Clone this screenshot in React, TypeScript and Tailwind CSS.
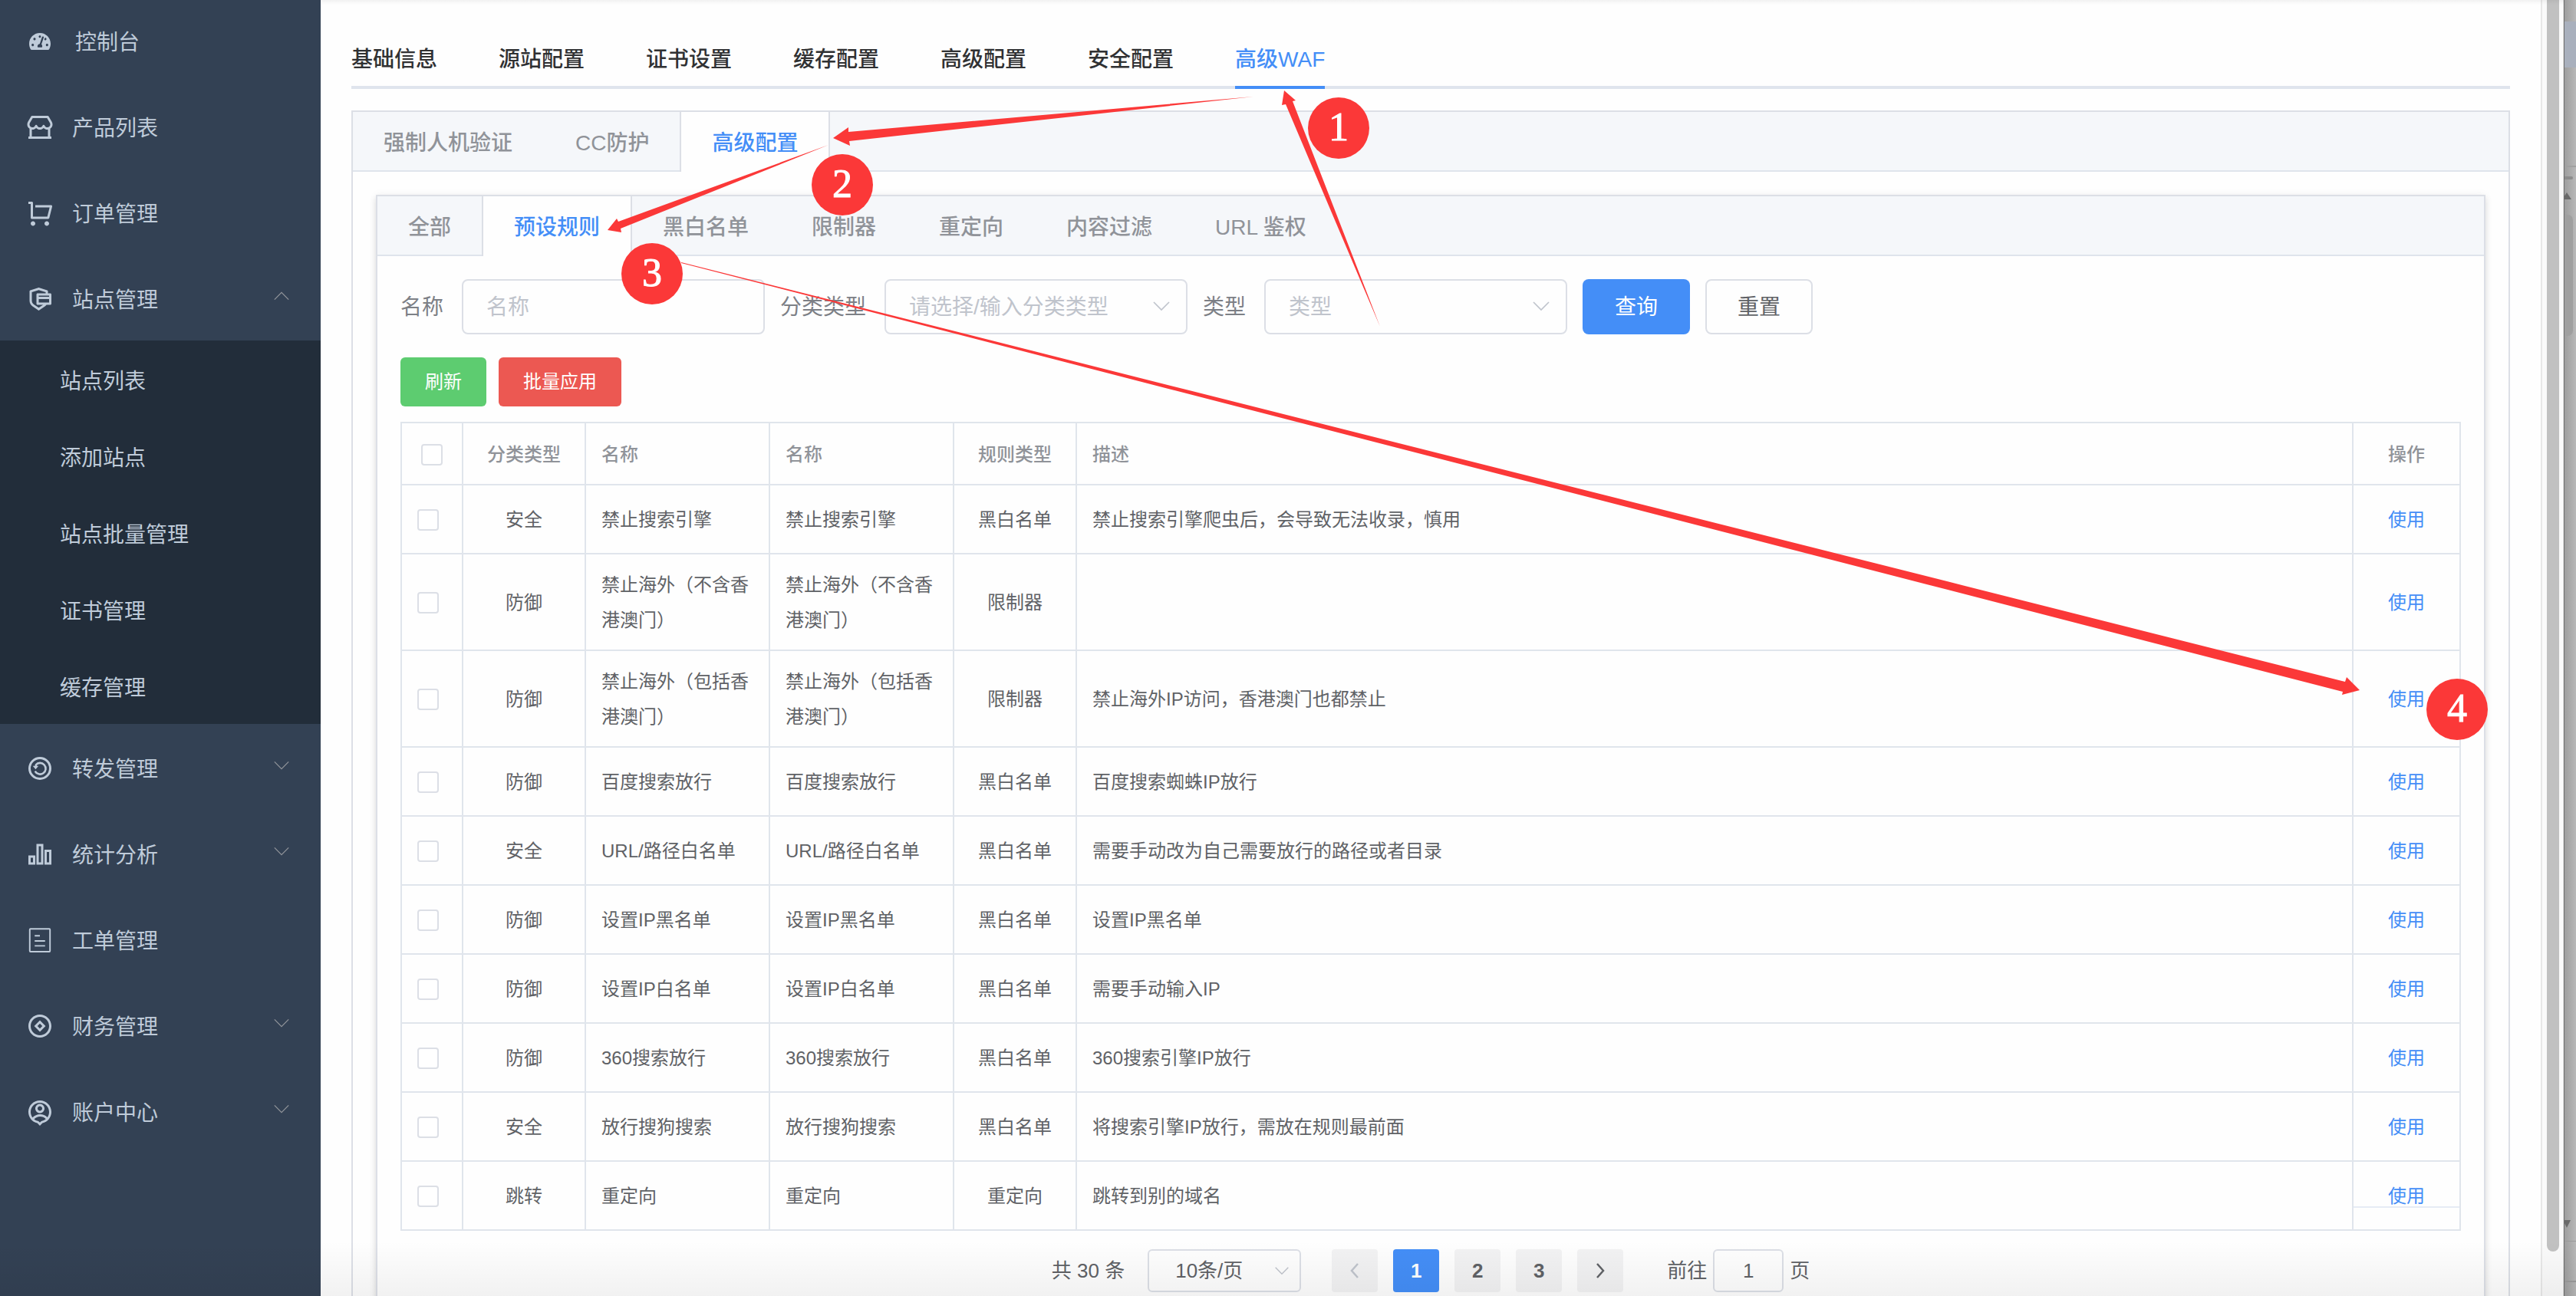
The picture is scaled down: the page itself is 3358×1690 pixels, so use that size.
import type { ReactNode } from 'react'
import { FaTachometerAlt } from 'react-icons/fa'
import {
  RiAccountPinCircleLine,
  RiBarChart2Line,
  RiCopperCoinLine,
  RiSecurePaymentLine,
  RiShoppingCartLine,
  RiStore2Line,
} from 'react-icons/ri'

type Rule = { kind: string; name: string; type: string; desc: string }

const RULES: Rule[] = [
  { kind: '安全', name: '禁止搜索引擎', type: '黑白名单', desc: '禁止搜索引擎爬虫后，会导致无法收录，慎用' },
  { kind: '防御', name: '禁止海外（不含香港澳门）', type: '限制器', desc: '' },
  { kind: '防御', name: '禁止海外（包括香港澳门）', type: '限制器', desc: '禁止海外IP访问，香港澳门也都禁止' },
  { kind: '防御', name: '百度搜索放行', type: '黑白名单', desc: '百度搜索蜘蛛IP放行' },
  { kind: '安全', name: 'URL/路径白名单', type: '黑白名单', desc: '需要手动改为自己需要放行的路径或者目录' },
  { kind: '防御', name: '设置IP黑名单', type: '黑白名单', desc: '设置IP黑名单' },
  { kind: '防御', name: '设置IP白名单', type: '黑白名单', desc: '需要手动输入IP' },
  { kind: '防御', name: '360搜索放行', type: '黑白名单', desc: '360搜索引擎IP放行' },
  { kind: '安全', name: '放行搜狗搜索', type: '黑白名单', desc: '将搜索引擎IP放行，需放在规则最前面' },
  { kind: '跳转', name: '重定向', type: '重定向', desc: '跳转到别的域名' },
]

const SITE_MENU = ['站点列表', '添加站点', '站点批量管理', '证书管理', '缓存管理']
const TOP_TABS = ['基础信息', '源站配置', '证书设置', '缓存配置', '高级配置', '安全配置', '高级WAF']
const WAF_TABS = ['强制人机验证', 'CC防护', '高级配置']
const RULE_TABS = ['全部', '预设规则', '黑白名单', '限制器', '重定向', '内容过滤', 'URL 鉴权']

function Chevron({ dir = 'down', className = '' }: { dir?: 'up' | 'down' | 'left' | 'right'; className?: string }) {
  const d = {
    down: 'M2 7 L12 17 L22 7',
    up: 'M2 17 L12 7 L22 17',
    left: 'M16 3 L8 12 L16 21',
    right: 'M8 3 L16 12 L8 21',
  }[dir]
  return (
    <svg viewBox="0 0 24 24" fill="none" stroke="currentColor" strokeWidth="1.7" className={className} aria-hidden="true">
      <path d={d} />
    </svg>
  )
}

function ForwardIcon() {
  return (
    <svg viewBox="0 0 24 24" fill="none" stroke="currentColor" strokeWidth="2" className="size-9" aria-hidden="true">
      <circle cx="12" cy="12" r="9" />
      <path d="M7.8 14.4 A4.9 4.9 0 1 0 8.4 9" strokeWidth="1.7" />
      <path d="M5.8 9.9 H10.8 L8.3 12.8 Z M7.4 10.4 L8 8.4 L9.2 8.6 L9.4 10.4 Z" fill="currentColor" stroke="none" />
    </svg>
  )
}

function TicketIcon() {
  return (
    <svg viewBox="0 0 24 24" fill="none" stroke="currentColor" strokeWidth="1.3" className="size-9" aria-hidden="true">
      <rect x="3.2" y="2.2" width="17.6" height="19.8" rx="0.6" />
      <path d="M7.5 8.2 H12 M7.5 12.6 H16.5 M7.5 16.9 H16.5" />
    </svg>
  )
}

function MenuItem({ icon, label, arrow }: { icon: ReactNode; label: string; arrow?: 'up' | 'down' }) {
  return (
    <a href="#" className="flex h-28 items-center pt-1 pr-10 pl-[34px] text-[28px]">
      <span className="flex min-w-9 justify-center text-4xl">{icon}</span>
      <span className="ml-6 flex-1 pt-1">{label}</span>
      {arrow && <Chevron dir={arrow} className="-mt-2 size-[22px] stroke-[1.4] text-[#909399]" />}
    </a>
  )
}

function Sidebar() {
  return (
    <aside className="w-[418px] shrink-0 overflow-hidden bg-[#334154] text-[#bfcbd9]">
      <nav className="-mt-1">
        <MenuItem icon={<FaTachometerAlt className="mr-2 ml-1 text-[28px]" />} label="控制台" />
        <MenuItem icon={<RiStore2Line />} label="产品列表" />
        <MenuItem icon={<RiShoppingCartLine />} label="订单管理" />
        <MenuItem icon={<RiSecurePaymentLine />} label="站点管理" arrow="up" />
        <div className="bg-[#222d3a]">
          {SITE_MENU.map(s => (
            <a key={s} href="#" className="flex h-[100px] items-center pt-2 pl-[78px] text-[28px]">{s}</a>
          ))}
        </div>
        <MenuItem icon={<ForwardIcon />} label="转发管理" arrow="down" />
        <MenuItem icon={<RiBarChart2Line />} label="统计分析" arrow="down" />
        <MenuItem icon={<TicketIcon />} label="工单管理" />
        <MenuItem icon={<RiCopperCoinLine />} label="财务管理" arrow="down" />
        <MenuItem icon={<RiAccountPinCircleLine />} label="账户中心" arrow="down" />
      </nav>
    </aside>
  )
}

function CardTabs({ tabs, active }: { tabs: string[]; active: string }) {
  return (
    <div className="flex border-b-2 border-[#dfe4ec] bg-[#f5f7fa]" role="tablist">
      {tabs.map(t => (
        <button
          key={t}
          type="button"
          role="tab"
          aria-selected={t === active}
          className={
            t === active
              ? '-mb-0.5 -ml-0.5 h-[78px] border-x-2 border-[#dcdfe6] bg-[#fefefe] px-10 pt-1 text-[28px] font-medium text-[#448ef7]'
              : '-ml-0.5 h-[76px] border-x-2 border-transparent px-10 pt-1.5 text-[28px] font-medium text-[#909399]'
          }
        >
          {t}
        </button>
      ))}
    </div>
  )
}

function SelectBox({ id, placeholder }: { id: string; placeholder: string }) {
  return (
    <div className="relative">
      <select id={id} className="h-[72px] w-[395px] appearance-none rounded-lg border-2 border-[#dcdfe6] bg-transparent px-[30px] pt-0.5 text-[28px] text-[#c0c4cc]">
        <option>{placeholder}</option>
      </select>
      <Chevron className="pointer-events-none absolute top-[23px] right-[22px] size-6 text-[#c0c4cc]" />
    </div>
  )
}

function Filters() {
  const label = 'pt-0.5 pr-6 text-[28px] text-[#7d8086]'
  return (
    <form className="flex items-center" onSubmit={e => e.preventDefault()}>
      <label htmlFor="name" className={label}>名称</label>
      <input id="name" placeholder="名称" className="mr-5 h-[72px] w-[395px] rounded-lg border-2 border-[#dcdfe6] px-[30px] pt-0.5 text-[28px] placeholder:text-[#c0c4cc]" />
      <label htmlFor="kind" className={label}>分类类型</label>
      <SelectBox id="kind" placeholder="请选择/输入分类类型" />
      <label htmlFor="type" className={`${label} pl-5`}>类型</label>
      <SelectBox id="type" placeholder="类型" />
      <button type="submit" className="ml-5 h-[72px] rounded-lg bg-[#448ef7] px-[42px] pt-0.5 text-[28px] text-white">查询</button>
      <button type="reset" className="ml-5 h-[72px] rounded-lg border-2 border-[#dcdfe6] px-10 pt-0.5 text-[28px] text-[#606266]">重置</button>
    </form>
  )
}

const box = 'block size-7 appearance-none rounded border-2 border-[#dcdfe6] bg-white'

function RuleTable() {
  const th = 'border-r-2 border-b-2 border-[#e0e5ec] px-5 pt-0.5 font-medium'
  const td = 'border-r-2 border-b-2 border-[#e0e5ec] px-5 pt-[17px] pb-[15px]'
  return (
    <table className="mt-5 w-full table-fixed border-separate border-spacing-0 border-t-2 border-l-2 border-[#e0e5ec] text-2xl leading-[46px] text-[#606266]">
      <colgroup>
        <col className="w-20" />
        <col className="w-40" />
        <col className="w-60" />
        <col className="w-60" />
        <col className="w-40" />
        <col />
        <col className="w-[140px]" />
      </colgroup>
      <thead>
        <tr className="h-[81px] text-[#909399]">
          <th className={th}><input type="checkbox" aria-label="全选" className={`${box} mx-auto`} /></th>
          <th className={`${th} text-center`}>分类类型</th>
          <th className={`${th} text-left`}>名称</th>
          <th className={`${th} text-left`}>名称</th>
          <th className={`${th} text-center`}>规则类型</th>
          <th className={`${th} text-left`}>描述</th>
          <th className={`${th} text-center`}>操作</th>
        </tr>
      </thead>
      <tbody>
        {RULES.map((r, i) => (
          <tr key={r.name} className="h-[90px]">
            <td className={td}><input type="checkbox" aria-label={r.name} className={box} /></td>
            <td className={`${td} text-center`}>{r.kind}</td>
            <td className={td}>{r.name}</td>
            <td className={td}>{r.name}</td>
            <td className={`${td} text-center`}>{r.type}</td>
            <td className={td}>{r.desc}</td>
            <td className={`${td} relative text-center`}>
              <button type="button" className="text-[#448ef7]">使用</button>
              {/* lower edge of the fixed column */}
              {i === RULES.length - 1 && <span className="absolute inset-x-0 bottom-7 h-0.5 bg-[#e6ebf5]" />}
            </td>
          </tr>
        ))}
      </tbody>
    </table>
  )
}

function Pager() {
  const btn = 'flex h-14 w-[60px] items-center justify-center rounded bg-[#f2f2f3] font-bold'
  return (
    <div className="mt-6 flex items-center justify-center text-[26px] text-[#606266]">
      <span>共 30 条</span>
      <div className="relative mr-10 ml-[30px]">
        <select aria-label="每页条数" className="h-14 w-[200px] appearance-none rounded-md border-2 border-[#dcdfe6] pl-[34px]">
          <option>10条/页</option>
        </select>
        <Chevron className="pointer-events-none absolute top-[18px] right-[15px] size-5 text-[#c0c4cc]" />
      </div>
      <div className="flex gap-5">
        <button type="button" aria-label="上一页" className={`${btn} text-[#c0c4cc]`}><Chevron dir="left" className="size-6 stroke-[2.5]" /></button>
        <button type="button" className="h-14 w-[60px] rounded bg-[#448ef7] font-bold text-white">1</button>
        <button type="button" className={btn}>2</button>
        <button type="button" className={btn}>3</button>
        <button type="button" aria-label="下一页" className={btn}><Chevron dir="right" className="size-6 stroke-[2.5]" /></button>
      </div>
      <label htmlFor="page" className="ml-[57px]">前往</label>
      <input id="page" defaultValue="1" className="mx-2 h-14 w-[92px] rounded-md border-2 border-[#dcdfe6] text-center" />
      <span>页</span>
    </div>
  )
}

function Scrollbars() {
  return (
    <>
      <div className="flex w-[30px] shrink-0 border-r border-l-2 border-r-[#e4e4e4] border-l-[#e8e8e8] bg-[#fafafa] pl-1.5">
        <div className="h-[1632px] w-4 rounded-b-full bg-[#c1c1c1]" />
      </div>
      <svg className="h-full w-4 shrink-0" aria-hidden="true">
        <defs>
          <linearGradient id="edge">
            <stop offset="0" stopColor="#9c9c9c" />
            <stop offset="1" stopColor="#b8b8b8" />
          </linearGradient>
        </defs>
        <rect width="16" height="100%" fill="url(#edge)" />
        <rect y="28" width="16" height="60" fill="#a9b0bd" />
        <rect y="216" width="16" height="2" fill="#a0a0a0" />
        <rect x="-4" y="230" width="16" height="4" rx="2" fill="#8c8c8c" />
        <path d="M-2 260 L4 251 L10 260 Z" fill="#6a6a6a" />
        <rect x="-8" y="280" width="20" height="158" rx="7" fill="#9f9f9f" />
        <path d="M-1 1591 H9 L4 1601 Z" fill="#6a6a6a" />
        <rect y="1618" width="16" height="1" fill="#9a9a9a" />
        <rect y="1670" width="16" height="2" fill="#9a9a9a" />
        <rect width="1" height="100%" fill="#6e6e6e" />
      </svg>
    </>
  )
}

const STEPS = [
  { n: 1, x: 1745, y: 167 },
  { n: 2, x: 1098, y: 241 },
  { n: 3, x: 850, y: 357 },
  { n: 4, x: 3203, y: 925 },
]

function Annotations() {
  return (
    <svg viewBox="0 0 3358 1690" className="pointer-events-none absolute top-0 left-0 w-full" fill="#fb3838">
      <path d="M1799 426 L1676 136 L1671 137 L1674 118 L1689 131 L1685 132 Z" />
      <path d="M1634 126 L1106 172 L1106 166 L1086 180 L1108 190 L1107 184 Z" />
      <path d="M1080 189 L806 289 L804 285 L792 300 L810 303 L809 298 Z" />
      <path d="M888 342 L3057 889 L3059 883 L3076 900 L3053 906 L3054 902 L888 343 Z" />
      {STEPS.map(s => (
        <g key={s.n}>
          <circle cx={s.x} cy={s.y} r="40" />
          <text x={s.x} y={s.y + 16} textAnchor="middle" fill="#fff" stroke="#fff" className="font-['Liberation_Serif',serif] text-[52px]">{s.n}</text>
        </g>
      ))}
    </svg>
  )
}

export default function App() {
  return (
    <div className="relative flex h-screen overflow-hidden bg-[#fefefe] font-['Liberation_Sans','Noto_Sans_CJK_SC',sans-serif]">
      <Sidebar />
      <main className="min-w-0 flex-1 px-10">
        <div className="mb-7 flex gap-20 border-b-4 border-[#dfe4ed] pt-9" role="tablist">
          {TOP_TABS.map(t => (
            <button
              key={t}
              type="button"
              role="tab"
              aria-selected={t === '高级WAF'}
              className={
                t === '高级WAF'
                  ? '-mb-1 h-20 border-b-4 border-[#448ef7] pt-2 text-[28px] font-medium text-[#448ef7]'
                  : '-mb-1 h-20 border-b-4 border-transparent pt-2 text-[28px] font-medium text-[#303133]'
              }
            >
              {t}
            </button>
          ))}
        </div>
        <section className="border-2 border-[#dcdfe6]">
          <CardTabs tabs={WAF_TABS} active="高级配置" />
          <div className="p-[30px]">
            <section className="border-2 border-[#dcdfe6] bg-[#fefefe] shadow-[0_4px_8px_rgba(0,0,0,0.12),0_0_12px_rgba(0,0,0,0.04)]">
              <CardTabs tabs={RULE_TABS} active="预设规则" />
              <div className="p-[30px]">
                <Filters />
                <div className="mt-[30px] flex gap-4 text-2xl text-white">
                  <button type="button" className="h-16 rounded-md bg-[#5dcc70] px-8">刷新</button>
                  <button type="button" className="h-16 rounded-md bg-[#ec5852] px-8">批量应用</button>
                </div>
                <RuleTable />
                <Pager />
              </div>
            </section>
          </div>
        </section>
      </main>
      <div className="pointer-events-none absolute inset-x-0 bottom-0 h-[72px] bg-linear-to-b from-transparent to-black/5" />
      <div className="pointer-events-none absolute top-0 right-4 left-[418px] h-1.5 bg-linear-to-b from-black/5 to-transparent" />
      <Scrollbars />
      <Annotations />
    </div>
  )
}
